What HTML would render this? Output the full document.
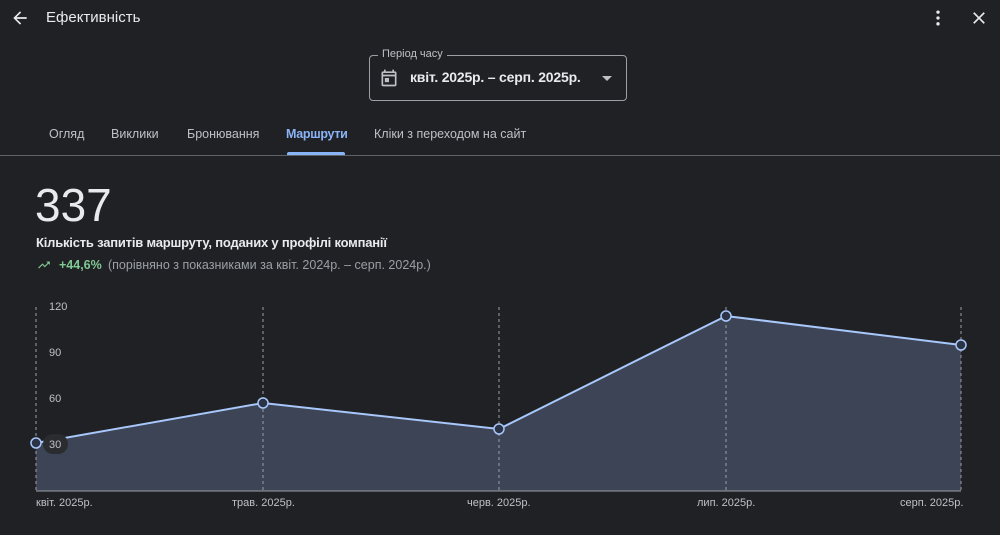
<!DOCTYPE html>
<html><head><meta charset="utf-8"><style>
*{margin:0;padding:0;box-sizing:border-box}
body{width:1000px;height:535px;background:#202124;font-family:"Liberation Sans",sans-serif;color:#e8eaed;position:relative;overflow:hidden}
.a{position:absolute;white-space:nowrap}
</style></head><body>
<svg class="a" style="left:10px;top:8px" width="20" height="20" viewBox="0 0 24 24"><path d="M20 11H7.8l5.6-5.6L12 4l-8 8 8 8 1.4-1.4L7.8 13H20z" fill="#e8eaed"/></svg>
<div class="a" style="left:46px;top:9px;font-size:15px">Ефективність</div>
<svg class="a" style="left:928px;top:8px" width="20" height="20" viewBox="0 0 24 24"><circle cx="12" cy="5" r="2" fill="#e8eaed"/><circle cx="12" cy="12" r="2" fill="#e8eaed"/><circle cx="12" cy="19" r="2" fill="#e8eaed"/></svg>
<svg class="a" style="left:969px;top:8px" width="20" height="20" viewBox="0 0 24 24"><path d="M19 6.4L17.6 5 12 10.6 6.4 5 5 6.4 10.6 12 5 17.6 6.4 19 12 13.4 17.6 19 19 17.6 13.4 12z" fill="#e8eaed"/></svg>
<div class="a" style="left:369px;top:55px;width:258px;height:46px;border:1px solid #9aa0a6;border-radius:4px"></div>
<div class="a" style="left:378px;top:48px;font-size:11px;color:#bdc1c6;background:#202124;padding:0 4px">Період часу</div>
<svg class="a" style="left:379px;top:68px" width="20" height="20" viewBox="0 0 24 24"><path d="M19 4h-1V2h-2v2H8V2H6v2H5a2 2 0 0 0-2 2v14a2 2 0 0 0 2 2h14a2 2 0 0 0 2-2V6a2 2 0 0 0-2-2zm0 16H5V10h14zm0-12H5V6h14z" fill="#bdc1c6"/><rect x="7" y="12" width="5" height="5" fill="#bdc1c6"/></svg>
<div class="a" style="left:410px;top:69px;font-size:14px;font-weight:bold;color:#e8eaed;letter-spacing:-0.2px">квіт. 2025р. – серп. 2025р.</div>
<div class="a" style="left:602px;top:76px;width:0;height:0;border-left:5px solid transparent;border-right:5px solid transparent;border-top:5px solid #bdc1c6"></div>
<div class="a" style="left:49px;top:127px;font-size:12.5px;color:#bdc1c6">Огляд</div>
<div class="a" style="left:111px;top:127px;font-size:12.5px;color:#bdc1c6">Виклики</div>
<div class="a" style="left:187px;top:127px;font-size:12.5px;color:#bdc1c6">Бронювання</div>
<div class="a" style="left:286px;top:127px;font-size:12.5px;color:#8ab4f8;font-weight:bold;letter-spacing:-0.3px">Маршрути</div>
<div class="a" style="left:374px;top:127px;font-size:12.5px;color:#bdc1c6">Кліки з переходом на сайт</div>
<div class="a" style="left:287px;top:152px;width:58px;height:3px;background:#8ab4f8;border-radius:2px 2px 0 0"></div>
<div class="a" style="left:0;top:155px;width:1000px;height:1px;background:#5f6368"></div>
<div class="a" style="left:35px;top:178px;font-size:46px;color:#e8eaed">337</div>
<div class="a" style="left:36px;top:235px;font-size:13px;font-weight:bold;letter-spacing:-0.2px">Кількість запитів маршруту, поданих у профілі компанії</div>
<svg class="a" style="left:36px;top:258px" width="16" height="14" viewBox="0 0 24 24"><path d="M16 6l2.3 2.3-4.9 4.9-4-4L2 16.6 3.4 18l6-6 4 4 6.3-6.3L22 12V6z" fill="#81c995"/></svg>
<div class="a" style="left:59px;top:258px;font-size:12.5px;font-weight:bold;color:#81c995">+44,6%</div>
<div class="a" style="left:108px;top:258px;font-size:12.5px;color:#9aa0a6">(порівняно з показниками за квіт. 2024р. – серп. 2024р.)</div>
<svg class="a" style="left:0;top:0" width="1000" height="535">
<path d="M36 443L263 403L499 429L726 316L961 345L961 491L36 491Z" fill="#3c4456"/>
<g stroke="#9aa0a6" stroke-dasharray="3,3" stroke-width="1">
<line x1="36" y1="307" x2="36" y2="491"/><line x1="263" y1="307" x2="263" y2="491"/><line x1="499" y1="307" x2="499" y2="491"/><line x1="726" y1="307" x2="726" y2="491"/><line x1="961" y1="307" x2="961" y2="491"/>
</g>
<line x1="36" y1="491" x2="961" y2="491" stroke="#9aa0a6"/>
<polyline points="36,443 263,403 499,429 726,316 961,345" fill="none" stroke="#a8c7fa" stroke-width="2"/>
<rect x="43" y="434" width="25" height="20" rx="10" fill="#2a2c30"/>
<g fill="#2b3346" stroke="#a8c7fa" stroke-width="1.5">
<circle cx="36" cy="443" r="5"/><circle cx="263" cy="403" r="5"/><circle cx="499" cy="429" r="5"/><circle cx="726" cy="316" r="5"/><circle cx="961" cy="345" r="5"/>
</g>
<g font-family="Liberation Sans,sans-serif" font-size="11" fill="#bdc1c6">
<text x="49" y="310">120</text><text x="49" y="356">90</text><text x="49" y="402">60</text><text x="49" y="448">30</text>
<text x="36" y="506">квіт. 2025р.</text><text x="232" y="506">трав. 2025р.</text><text x="467" y="506">черв. 2025р.</text><text x="697" y="506">лип. 2025р.</text><text x="900" y="506">серп. 2025р.</text>
</g>
</svg>
</body></html>
